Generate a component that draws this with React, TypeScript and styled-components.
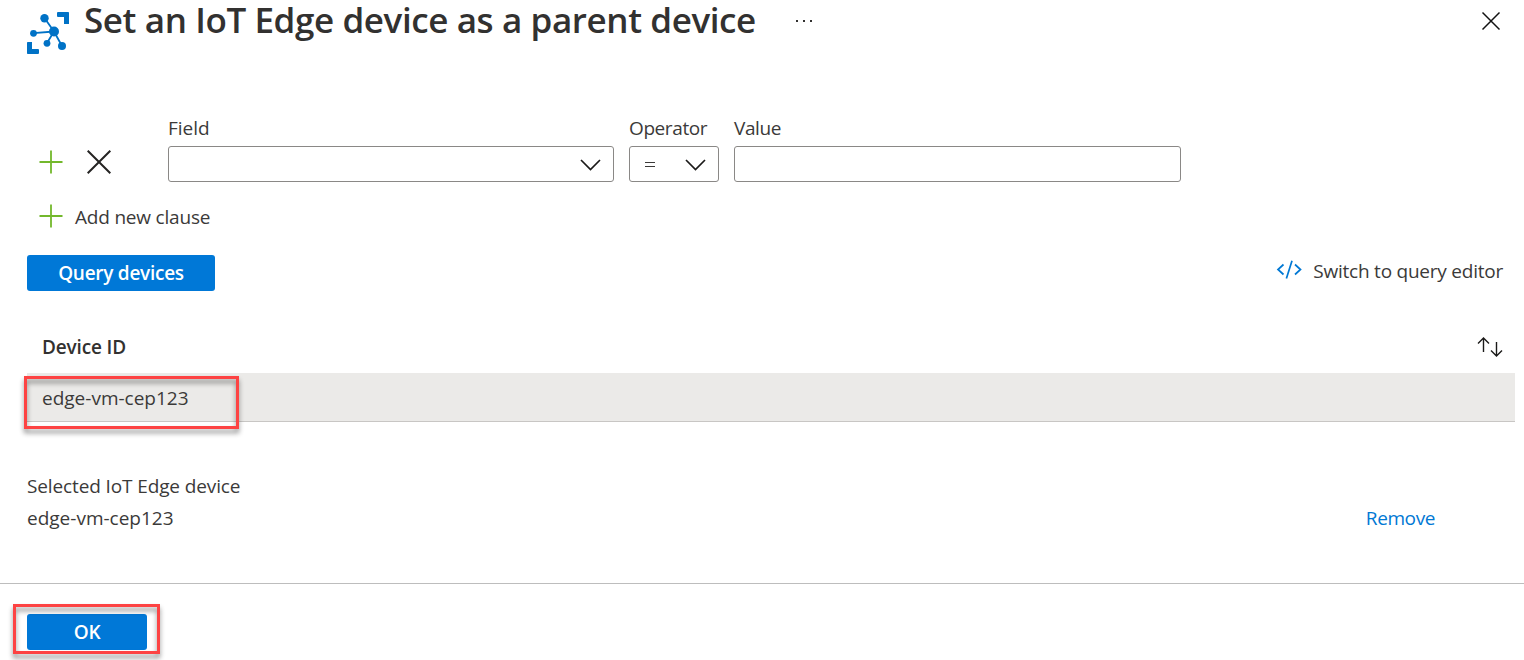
import React from "react";
import styled, { createGlobalStyle } from "styled-components";

const GlobalStyle = createGlobalStyle`
  * { box-sizing: border-box; }
  body { margin: 0; background: #fff; overflow: hidden; }
`;

const Page = styled.div`
  width: 1524px;
  height: 660px;
  display: flex;
  flex-direction: column;
  background: #fff;
  color: #3b3a39;
  font-family: "Open Sans", "Noto Sans", sans-serif;
  font-size: 19px;
  line-height: 24px;
`;

const Text = styled.span<{ $spacing?: number; $strong?: boolean }>`
  white-space: nowrap;
  letter-spacing: ${(p) => p.$spacing ?? 0}px;
  font-weight: ${(p) => (p.$strong ? 600 : 400)};
`;

const Header = styled.header`
  height: 116px;
  display: flex;
  align-items: flex-start;
  padding: 0 23px 0 27px;
`;

const Logo = styled.svg`
  width: 42px;
  height: 42px;
  margin: 12px 15px 0 0;
`;

const Title = styled.h1`
  margin: 0;
  width: 711px;
  font-size: 35px;
  line-height: 40px;
  font-weight: 600;
  letter-spacing: -0.4px;
  white-space: nowrap;
  color: #323130;
`;

const Dots = styled.svg`
  width: 18px;
  height: 4px;
  margin-top: 19px;
`;

const CloseIcon = styled.svg`
  width: 20px;
  height: 20px;
  margin: 11px 0 0 auto;
`;

const ClauseRow = styled.div`
  height: 66px;
  display: flex;
  align-items: flex-start;
  padding-left: 39px;
`;

const ClauseActions = styled.div`
  width: 129px;
  display: flex;
  gap: 23px;
  padding-top: 34px;
`;

const LineIcon = styled.svg`
  width: 25px;
  height: 25px;
  flex: none;
`;

const FieldGroup = styled.label<{ $width: number }>`
  width: ${(p) => p.$width}px;
  margin-right: 15px;
  display: flex;
  flex-direction: column;
  gap: 6px;
`;

const Control = styled.div`
  height: 36px;
  display: flex;
  align-items: center;
  justify-content: space-between;
  padding: 1px 12px 0 15px;
  border: 1px solid #8a8886;
  border-radius: 3px;
`;

const Chevron = styled.svg`
  width: 21px;
  height: 12px;
  margin-left: auto;
`;

const AddClause = styled.div`
  height: 73px;
  display: flex;
  padding: 22px 0 0 39px;
  gap: 11px;
`;

const AddLabel = styled.div`
  padding-top: 1px;
`;

const ActionRow = styled.div`
  height: 80px;
  display: flex;
  justify-content: space-between;
  align-items: flex-start;
  padding: 0 21px 0 27px;
`;

const Button = styled.button<{ $width: number }>`
  width: ${(p) => p.$width}px;
  height: 36px;
  padding: 0;
  border: 0;
  border-radius: 3px;
  background: #0078d7;
  color: #fff;
  font: inherit;
  line-height: 36px;
`;

const EditorLink = styled.div`
  display: flex;
  align-items: flex-start;
  gap: 11px;
  padding-top: 4px;
`;

const CodeIcon = styled.svg`
  width: 26px;
  height: 20px;
  margin-top: 1px;
`;

const TableHead = styled.div`
  height: 38px;
  display: flex;
  justify-content: space-between;
  padding: 0 21px 0 42px;
  color: #323130;
`;

const SortIcon = styled.svg`
  width: 26px;
  height: 20px;
  margin-top: 2px;
`;

const TableRow = styled.div`
  position: relative;
  height: 49px;
  margin: 0 9px 0 27px;
  padding: 13px 15px;
  background: #ebeae8;
  border-bottom: 1px solid #c8c6c4;
`;

const Highlight = styled.div<{ $x: number; $y: number; $w: number; $h: number }>`
  position: absolute;
  left: ${(p) => p.$x}px;
  top: ${(p) => p.$y}px;
  width: ${(p) => p.$w}px;
  height: ${(p) => p.$h}px;
  border: 3px solid #fd4343;
  filter: drop-shadow(0 4px 2.5px rgba(0, 0, 0, 0.45));
  pointer-events: none;
`;

const Selected = styled.section`
  height: 161px;
  display: flex;
  flex-direction: column;
  gap: 8px;
  padding: 52px 89px 0 27px;
`;

const SelectedRow = styled.div`
  display: flex;
  justify-content: space-between;
`;

const RemoveLink = styled.a`
  color: #0078d4;
`;

const Footer = styled.footer`
  height: 77px;
  padding: 30px 27px 0;
  border-top: 1px solid #bdbdbd;
`;

const FooterAction = styled.div`
  position: relative;
  width: 120px;
  height: 36px;
`;

const Plus = () => (
  <LineIcon viewBox="0 0 25 25" fill="none" stroke="#73b82c" strokeWidth="1.8">
    <path d="M.5 12H23.500M12 .5V23.500" />
  </LineIcon>
);

const Down = () => (
  <Chevron viewBox="0 0 21 12" fill="none" stroke="#1b1a19" strokeWidth="1.7">
    <path d="M1 1L10.5 10.5L20 1" />
  </Chevron>
);

export default function App() {
  return (
    <Page>
      <GlobalStyle />
      <Header>
        <Logo viewBox="0 0 42 42" fill="#0072c6">
          <path d="M31 0H41.200Q42 0 42 .8V12H37V5H31Q30 5 30 4V1Q30 0 31 0Z" />
          <path d="M.8 30H5V37H11Q12 37 12 38V41Q12 42 11 42H.8Q0 42 0 41.200V30.800Q0 30 .8 30Z" />
          <path
            d="M17.500 6L27 19.500L35 34M27 19.500L6.500 21.200M27 19.500L20 31"
            fill="none"
            stroke="#0072c6"
            strokeWidth="1.800"
          />
          <circle cx="17.500" cy="6.300" r="4.200" />
          <circle cx="27" cy="19.500" r="5" />
          <circle cx="6.500" cy="21.300" r="3.400" />
          <circle cx="20" cy="31.300" r="3.400" />
          <circle cx="35" cy="34" r="4" />
        </Logo>
        <Title>Set an IoT Edge device as a parent device</Title>
        <Dots viewBox="0 0 18 4" fill="#323130">
          <rect x="1" y="1" width="2" height="2" />
          <rect x="8" y="1" width="2" height="2" />
          <rect x="15" y="1" width="2" height="2" />
        </Dots>
        <CloseIcon viewBox="0 0 20 20" stroke="#111" strokeWidth="1.5">
          <path d="M1.500 1.500L18.500 18.500M18.500 1.500L1.500 18.500" />
        </CloseIcon>
      </Header>

      <ClauseRow>
        <ClauseActions>
          <Plus />
          <LineIcon viewBox="0 0 25 25" stroke="#252423" strokeWidth="2">
            <path d="M.7 .7L23.300 23.300M23.300 .7L.7 23.300" />
          </LineIcon>
        </ClauseActions>
        <FieldGroup $width={446}>
          <Text>Field</Text>
          <Control>
            <Down />
          </Control>
        </FieldGroup>
        <FieldGroup $width={90}>
          <Text $spacing={-0.4}>Operator</Text>
          <Control>
            <svg width="10" height="7" viewBox="0 0 10 7" stroke="#3b3a39" strokeWidth="1.2">
              <path d="M0 1.500H10M0 5.500H10" />
            </svg>
            <Down />
          </Control>
        </FieldGroup>
        <FieldGroup $width={447}>
          <Text $spacing={-0.4}>Value</Text>
          <Control />
        </FieldGroup>
      </ClauseRow>

      <AddClause>
        <Plus />
        <AddLabel>
          <Text $spacing={-0.2}>Add new clause</Text>
        </AddLabel>
      </AddClause>

      <ActionRow>
        <Button $width={188}>
          <Text $strong $spacing={-0.27}>Query devices</Text>
        </Button>
        <EditorLink>
          <CodeIcon viewBox="0 0 26 20" fill="none" stroke="#0078d4" strokeWidth="1.700">
            <path d="M7.500 4.500L2 9.500L7.500 14.500M19 4.500L24.500 9.500L19 14.500M16 .8L10.400 18.500" />
          </CodeIcon>
          <Text $spacing={-0.23}>Switch to query editor</Text>
        </EditorLink>
      </ActionRow>

      <TableHead>
        <Text $strong $spacing={-0.15}>Device ID</Text>
        <SortIcon viewBox="0 0 26 20" fill="none" stroke="#1b1a19" strokeWidth="1.400">
          <path d="M6.500 15V1M1 6.500L6.500 1L12 6.500M19.500 5V19M14 13.500L19.500 19L25 13.500" />
        </SortIcon>
      </TableHead>
      <TableRow>
        <Text>edge-vm-cep123</Text>
        <Highlight $x={-3} $y={3} $w={215} $h={53} />
      </TableRow>

      <Selected>
        <Text $spacing={-0.12}>Selected IoT Edge device</Text>
        <SelectedRow>
          <Text>edge-vm-cep123</Text>
          <RemoveLink>
            <Text $spacing={-0.4}>Remove</Text>
          </RemoveLink>
        </SelectedRow>
      </Selected>

      <Footer>
        <FooterAction>
          <Button $width={120}>
            <Text $strong $spacing={-0.4}>OK</Text>
          </Button>
          <Highlight $x={-14} $y={-10} $w={147} $h={50} />
        </FooterAction>
      </Footer>
    </Page>
  );
}
